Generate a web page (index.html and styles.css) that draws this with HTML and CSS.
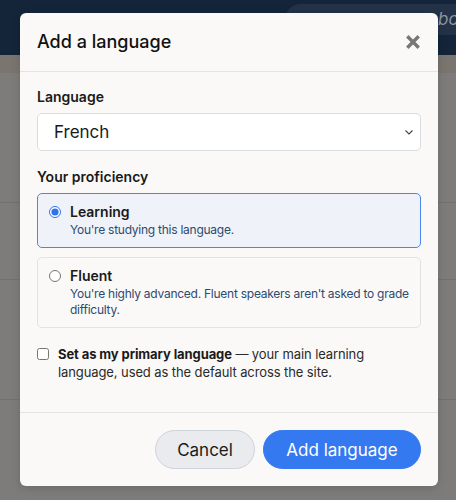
FILE: index.html
```html
<!DOCTYPE html>
<html lang="en">
<head>
    <meta charset="UTF-8">
    <meta name="viewport" content="width=device-width, initial-scale=1.0">
    <title>Add a language</title>
    <link rel="stylesheet" href="styles.css">
</head>
<body>

    <div class="page">
        <header class="topbar">
            <div class="search"><span>books</span></div>
        </header>
        <div class="band"></div>
        <div class="row row-1"></div>
        <div class="row row-2"></div>
        <div class="row row-3"></div>
        <div class="row row-4"></div>
    </div>

    <div class="modal">
        <div class="modal-head">
            <h2>Add a language</h2>
            <button class="close" aria-label="Close">
                <svg width="14" height="14" viewBox="0 0 14 14">
                    <path d="M2.5 2.5 L11.5 11.5 M11.5 2.5 L2.5 11.5" stroke="#777" stroke-width="3.4" stroke-linecap="square"/>
                </svg>
            </button>
        </div>

        <div class="modal-body">
            <label class="field-label" for="lang">Language</label>
            <div class="select-wrap">
                <select id="lang" class="select">
                    <option>French</option>
                </select>
                <svg class="chevron" width="8" height="5" viewBox="0 0 8 5">
                    <path d="M0.5 0.5 L4 4 L7.5 0.5" fill="none" stroke="#444" stroke-width="1.1"/>
                </svg>
            </div>

            <div class="field-label spaced">Your proficiency</div>

            <label class="option selected">
                <input type="radio" name="level" checked>
                <span class="option-text">
                    <span class="option-title">Learning</span>
                    <span class="option-desc">You're studying this language.</span>
                </span>
            </label>

            <label class="option">
                <input type="radio" name="level">
                <span class="option-text">
                    <span class="option-title">Fluent</span>
                    <span class="option-desc">You're highly advanced. Fluent speakers aren't asked to grade difficulty.</span>
                </span>
            </label>

            <label class="check">
                <input type="checkbox">
                <span class="check-text"><strong>Set as my primary language</strong> — your main learning language, used as the default across the site.</span>
            </label>
        </div>

        <div class="modal-foot">
            <button class="btn btn-light">Cancel</button>
            <button class="btn btn-primary">Add language</button>
        </div>
    </div>

</body>
</html>
```

FILE: styles.css
```css
body {
    margin: 0;
    font-family: Inter, "Open Sans", sans-serif;
    background-color: #7d7c7a;
    height: 500px;
    overflow: hidden;
}
.page {
    display: flex;
    flex-direction: column;
}
.topbar {
    height: 55px;
    background-color: #14253a;
    overflow: hidden;
}
.search {
    margin: 4px 0 0 285px;
    height: 31px;
    border-radius: 16px 0 0 16px;
    background-color: #233246;
    color: #8d96a3;
    font-style: italic;
    font-size: 17px;
    line-height: 31px;
    padding-left: 153px;
    white-space: nowrap;
    overflow: hidden;
}
.band {
    height: 18px;
    background-color: #7a756f;
}
.row {
    border-bottom: 1px solid #727170;
}
.row-1 { height: 129px; }
.row-2 { height: 76px; }
.row-3 { height: 119px; }
.row-4 { height: 94px; border-bottom: none; }

/* dialog */
.modal {
    position: absolute;
    left: 20px;
    top: 13px;
    width: 418px;
    background-color: #faf9f7;
    border-radius: 6px;
    box-shadow: 0 2px 10px rgba(0, 0, 0, 0.15);
}
.modal-head {
    display: flex;
    justify-content: space-between;
    align-items: center;
    padding: 15px 17px 16px 17px;
    border-bottom: 1px solid #e4e4e4;
}
.modal-head h2 {
    margin: 0;
    font-size: 18px;
    font-weight: 500;
    line-height: 27px;
    color: #111;
}
.close {
    border: none;
    background: none;
    padding: 0;
    width: 14px;
    height: 14px;
    margin-right: 1px;
    cursor: pointer;
}
.close svg {
    display: block;
}

.modal-body {
    padding: 15px 17px 31px 17px;
    display: flex;
    flex-direction: column;
}
.field-label {
    font-size: 14px;
    font-weight: 600;
    line-height: 20px;
    color: #1a1a1a;
    margin-bottom: 6px;
}
.field-label.spaced {
    margin-top: 16px;
}
.select-wrap {
    position: relative;
}
.select {
    display: block;
    appearance: none;
    height: 38px;
    width: 100%;
    border: 1px solid #d9dce1;
    border-radius: 5px;
    background-color: #fff;
    font-family: inherit;
    font-size: 17px;
    color: #1a1a1a;
    padding: 0 24px 0 16px;
}
.chevron {
    position: absolute;
    right: 8px;
    top: 17px;
    pointer-events: none;
}

.option {
    display: flex;
    align-items: flex-start;
    gap: 9px;
    padding: 8px 10px 9px 11px;
    border: 1px solid #e2e2e2;
    border-radius: 5px;
    margin-bottom: 9px;
    cursor: pointer;
}
.option.selected {
    border-color: #4a86f0;
    background-color: #eff2f8;
}
.option input {
    margin: 4px 0 0 0;
    width: 12px;
    height: 12px;
    accent-color: #2f72ec;
    flex-shrink: 0;
}
.option-text {
    display: flex;
    flex-direction: column;
}
.option-title {
    font-size: 14px;
    font-weight: 600;
    line-height: 20px;
    color: #1a1a1a;
}
.option-desc {
    font-size: 12px;
    letter-spacing: -0.25px;
    line-height: 16px;
    color: #2e4a6f;
}

.check {
    display: flex;
    align-items: flex-start;
    gap: 9px;
    margin-top: 8px;
    font-size: 13px;
    letter-spacing: -0.1px;
    line-height: 18px;
    color: #2a2a2a;
}
.check input {
    margin: 3px 0 0 0;
    width: 12px;
    height: 12px;
    flex-shrink: 0;
}
.check-text {
    max-width: 320px;
}
.check-text strong {
    color: #1a1a1a;
}

.modal-foot {
    display: flex;
    justify-content: flex-end;
    gap: 8px;
    padding: 17px 17px 17px 17px;
    border-top: 1px solid #e4e4e4;
}
.btn {
    height: 39px;
    border-radius: 20px;
    font-family: inherit;
    font-size: 17px;
    cursor: pointer;
}
.btn-light {
    width: 100px;
    background-color: #e9ebef;
    border: 1px solid #cfd3da;
    color: #1a1a1a;
}
.btn-primary {
    width: 158px;
    background-color: #3479f0;
    border: 1px solid #3479f0;
    color: #fff;
}
```
